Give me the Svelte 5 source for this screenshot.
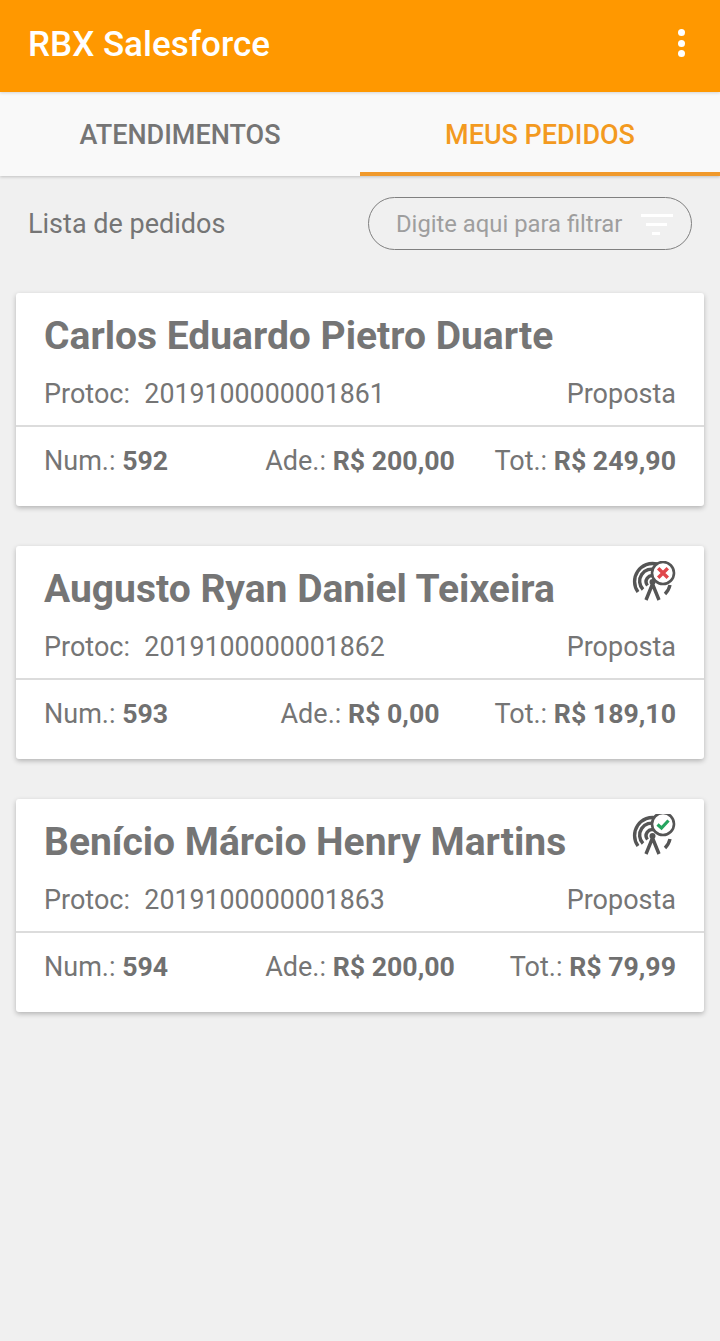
<script>
  const orders = [
    { name: 'Carlos Eduardo Pietro Duarte', protoc: '2019100000001861', num: '592', ade: 'R$ 200,00', tot: 'R$ 249,90', status: null },
    { name: 'Augusto Ryan Daniel Teixeira', protoc: '2019100000001862', num: '593', ade: 'R$ 0,00', tot: 'R$ 189,10', status: 'bad' },
    { name: 'Benício Márcio Henry Martins', protoc: '2019100000001863', num: '594', ade: 'R$ 200,00', tot: 'R$ 79,99', status: 'ok' }
  ];
</script>

<div class="page">
  <header class="appbar">
    <span class="title">RBX Salesforce</span>
    <span class="more"><i></i><i></i><i></i></span>
  </header>
  <nav class="tabs">
    <div class="tab">ATENDIMENTOS</div>
    <div class="tab active">MEUS PEDIDOS</div>
  </nav>
  <div class="filterrow">
    <span class="listlabel">Lista de pedidos</span>
    <div class="filter">
      <span class="ph">Digite aqui para filtrar</span>
      <svg class="ficon" width="32" height="22" viewBox="0 0 32 22">
        <rect x="0" y="0" width="32" height="3" fill="#fff" />
        <rect x="5" y="9" width="21" height="3" fill="#fff" />
        <rect x="11" y="18" width="8" height="3" fill="#fff" />
      </svg>
    </div>
  </div>
  <div class="list">
    {#each orders as o}
      <article class="card">
        <div class="top">
          <div class="namerow">
            <h2>{o.name}</h2>
            {#if o.status}
              <svg class="sig" width="44" height="44" viewBox="0 0 44 44">
                <g fill="none" stroke="#555" stroke-width="3.4" transform={o.status === 'ok' ? 'translate(0 1)' : ''}>
                  <path d="M6 31 A18 18 0 0 1 25 3" />
                  <path d="M11 28.5 A12 12 0 0 1 24 9" />
                  <path d="M15.5 24.5 A6 6 0 0 1 22 15" />
                  <path d="M38 24 A18 18 0 0 1 33 33" />
                  <path d="M20.5 23 L14 39 M20.5 23 L27 39" />
                  <circle cx="20.5" cy="21" r="3" fill="#555" stroke="none" />
                </g>
                <circle cx="31" cy={o.status === 'ok' ? 10 : 12} r="11" fill="#fff" stroke="#555" stroke-width="2.6" />
                {#if o.status === 'bad'}
                  <path d="M26.2 7.2 L35.8 16.8 M35.8 7.2 L26.2 16.8" stroke="#e0474c" stroke-width="3.4" fill="none" />
                {:else}
                  <path d="M25.5 10.5 L29.5 14 L36.5 6.5" stroke="#25a55f" stroke-width="3.2" fill="none" />
                {/if}
              </svg>
            {/if}
          </div>
          <div class="protoc">
            <span>Protoc:&nbsp; <span class="digits">{o.protoc}</span></span>
            <span>Proposta</span>
          </div>
        </div>
        <div class="bottom">
          <span>Num.:&nbsp;<b>{o.num}</b></span>
          <span class="mid">Ade.: <b>{o.ade}</b></span>
          <span class="end">Tot.: <b>{o.tot}</b></span>
        </div>
      </article>
    {/each}
  </div>
</div>

<style>
  :global(body) {
    margin: 0;
    background: #f0f0f0;
  }
  .page {
    min-height: 1341px;
    background: #f0f0f0;
    font-family: Roboto, "Liberation Sans", sans-serif;
    color: #757575;
    box-sizing: border-box;
  }
  .appbar {
    height: 92px;
    background: #ff9800;
    display: flex;
    align-items: center;
    justify-content: space-between;
    padding: 0 35px 0 28px;
    box-sizing: border-box;
    position: relative;
    z-index: 2;
    box-shadow: 0 1px 3px rgba(0, 0, 0, 0.15);
  }
  .title {
    color: #fff;
    font-size: 35px;
    font-weight: 500;
    position: relative;
    top: -2px;
  }
  .more {
    display: flex;
    flex-direction: column;
    gap: 3.5px;
    position: relative;
    top: -3px;
  }
  .more i {
    display: block;
    width: 7px;
    height: 7px;
    border-radius: 50%;
    background: #fff;
  }
  .tabs {
    display: flex;
    height: 84px;
    background: #f9f9f9;
    box-shadow: 0 1px 3px rgba(0, 0, 0, 0.2);
    position: relative;
    z-index: 1;
  }
  .tab {
    flex: 1;
    display: flex;
    align-items: center;
    justify-content: center;
    font-size: 27px;
    font-weight: 500;
    color: #757575;
    box-sizing: border-box;
    padding-top: 1px;
  }
  .tab.active {
    color: #f39a1f;
    position: relative;
  }
  .tab.active::after {
    content: "";
    position: absolute;
    left: 0;
    right: 0;
    bottom: 0;
    height: 4px;
    background: #f0992b;
  }
  .filterrow {
    display: flex;
    align-items: center;
    justify-content: space-between;
    padding: 21px 28px 0 28px;
  }
  .listlabel {
    font-size: 27px;
    color: #757575;
  }
  .filter {
    width: 324px;
    height: 53px;
    box-sizing: border-box;
    border: 1px solid #808080;
    border-radius: 27px;
    display: flex;
    align-items: center;
    justify-content: space-between;
    padding: 0 18px 0 27px;
  }
  .ph {
    font-size: 23.8px;
    color: #9e9e9e;
  }
  .ficon {
    margin-top: 3px;
  }
  .list {
    display: flex;
    flex-direction: column;
    gap: 40px;
    padding: 43px 16px 0;
  }
  .card {
    height: 213px;
    background: #fff;
    border-radius: 3px;
    box-shadow: 0 2px 5px rgba(0, 0, 0, 0.25);
    display: flex;
    flex-direction: column;
  }
  .top {
    height: 134px;
    box-sizing: border-box;
    padding: 0 28px;
    border-bottom: 2px solid #dcdcdc;
  }
  .namerow {
    height: 85px;
    display: flex;
    align-items: center;
    justify-content: space-between;
    position: relative;
  }
  h2 {
    margin: 0;
    font-size: 39px;
    font-weight: 700;
    color: #757575;
    white-space: nowrap;
  }
  .sig {
    position: absolute;
    right: 0;
    top: 15px;
  }
  .protoc {
    display: flex;
    justify-content: space-between;
    font-size: 27px;
    color: #757575;
    line-height: 32px;
  }
  .digits {
    font-size: 26.75px;
    margin-left: 1px;
  }
  .bottom {
    display: grid;
    grid-template-columns: 1fr auto 1fr;
    padding: 17px 28px 0;
    font-size: 27px;
    line-height: 34px;
    color: #757575;
  }
  .mid {
    text-align: center;
  }
  .end {
    text-align: right;
  }
  b {
    font-weight: 700;
    font-size: 26.7px;
    color: #707070;
  }
</style>
